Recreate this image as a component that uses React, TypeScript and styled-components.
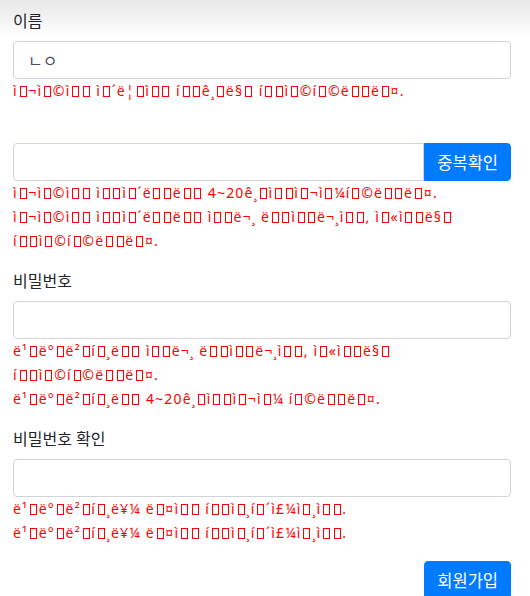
import React, { useState } from "react";
import styled, { createGlobalStyle } from "styled-components";

// the messages come through a broken charset: utf-8 bytes read as latin-1,
// and the control bytes show up as empty boxes
const garble = (word: string) =>
  Array.from(new TextEncoder().encode(word)).map((b) =>
    b >= 0x80 && b < 0xa0 ? null : String.fromCharCode(b)
  );

const Garbled = ({ text }: { text: string }) => (
  <>
    {text.split(" ").map((word, w) => (
      <React.Fragment key={w}>
        {w > 0 && " "}
        <Word>
          {garble(word).map((ch, i) =>
            ch === null ? (
              <Tofu key={i} />
            ) : (
              <React.Fragment key={i}>{ch}</React.Fragment>
            )
          )}
        </Word>
      </React.Fragment>
    ))}
  </>
);

const GlobalStyle = createGlobalStyle`
  html, body {
    margin: 0;
    padding: 0;
  }
  body {
    font-family: "Noto Sans", "Noto Sans CJK KR", sans-serif;
    font-size: 16px;
    color: #212529;
    background: linear-gradient(#e7e7e7 0px, #ffffff 38px) no-repeat #ffffff;
  }
`;

export default function App() {
  const [name, setName] = useState("ㄴㅇ");
  const [userId, setUserId] = useState("");
  const [password, setPassword] = useState("");
  const [passwordCheck, setPasswordCheck] = useState("");

  return (
    <Form onSubmit={(e) => e.preventDefault()}>
      <GlobalStyle />
      <Group>
        <Label>이름</Label>
        <Input value={name} onChange={(e) => setName(e.target.value)} />
        <Errors>
          <Error>
            <Garbled text="사용자 이름은 한글만 허용합니다." />
          </Error>
        </Errors>
      </Group>

      <Group $top={40}>
        <InputGroup>
          <GroupInput
            value={userId}
            onChange={(e) => setUserId(e.target.value)}
          />
          <Button type="button" $attached>
            중복확인
          </Button>
        </InputGroup>
        <Errors>
          <Error>
            <Garbled text="사용자 아이디는 4~20글자여야합니다." />
          </Error>
          <Error>
            <Garbled text="사용자 아이디는 영문 대소문자, 숫자만 허용합니다." />
          </Error>
        </Errors>
      </Group>

      <Group>
        <Label>비밀번호</Label>
        <Input
          type="password"
          value={password}
          onChange={(e) => setPassword(e.target.value)}
        />
        <Errors>
          <Error>
            <Garbled text="비밀번호는 영문 대소문자, 숫자만 허용합니다." />
          </Error>
          <Error>
            <Garbled text="비밀번호는 4~20글자여야 합니다." />
          </Error>
        </Errors>
      </Group>

      <Group>
        <Label>비밀번호 확인</Label>
        <Input
          type="password"
          value={passwordCheck}
          onChange={(e) => setPasswordCheck(e.target.value)}
        />
        <Errors>
          <Error>
            <Garbled text="비밀번호를 다시 확인해주세요." />
          </Error>
          <Error>
            <Garbled text="비밀번호를 다시 확인해주세요." />
          </Error>
        </Errors>
      </Group>

      <Footer>
        <Button type="submit">회원가입</Button>
      </Footer>
    </Form>
  );
}

const Form = styled.form`
  display: flex;
  flex-direction: column;
  padding: 9px 19px 0 13px;
`;

const Group = styled.div<{ $top?: number }>`
  display: flex;
  flex-direction: column;
  margin-top: ${(p) => p.$top ?? 16}px;

  &:first-child {
    margin-top: 0;
  }
`;

const Label = styled.label`
  font-size: 16px;
  line-height: 24px;
  margin-bottom: 8px;
`;

const Input = styled.input`
  box-sizing: border-box;
  width: 100%;
  height: 38px;
  padding: 6px 14px;
  font: inherit;
  font-size: 16px;
  color: #495057;
  background: #fff;
  border: 1px solid #ced4da;
  border-radius: 4px;
  outline: none;
`;

const InputGroup = styled.div`
  display: flex;
  align-items: stretch;
`;

const GroupInput = styled(Input)`
  flex: 1;
  min-width: 0;
  border-top-right-radius: 0;
  border-bottom-right-radius: 0;
`;

const Button = styled.button<{ $attached?: boolean }>`
  height: 38px;
  padding: 0 12px;
  font-family: "Noto Sans CJK KR", sans-serif;
  font-size: 16.5px;
  color: #fff;
  background: #007bff;
  border: 1px solid #007bff;
  border-radius: ${(p) => (p.$attached ? "0 4px 4px 0" : "4px")};
  cursor: pointer;
  white-space: nowrap;
`;

const Errors = styled.div`
  display: flex;
  flex-direction: column;
`;

const Error = styled.div`
  color: #ff0000;
  font-size: 14px;
  line-height: 24px;
  letter-spacing: 1.2px;
`;

const Word = styled.span`
  white-space: nowrap;
`;

const Tofu = styled.span`
  display: inline-block;
  box-sizing: border-box;
  width: 7px;
  height: 11px;
  margin: 0 1.75px;
  border: 1px solid #ff0000;
  vertical-align: -1px;
`;

const Footer = styled.div`
  display: flex;
  justify-content: flex-end;
  margin-top: 16px;
`;
